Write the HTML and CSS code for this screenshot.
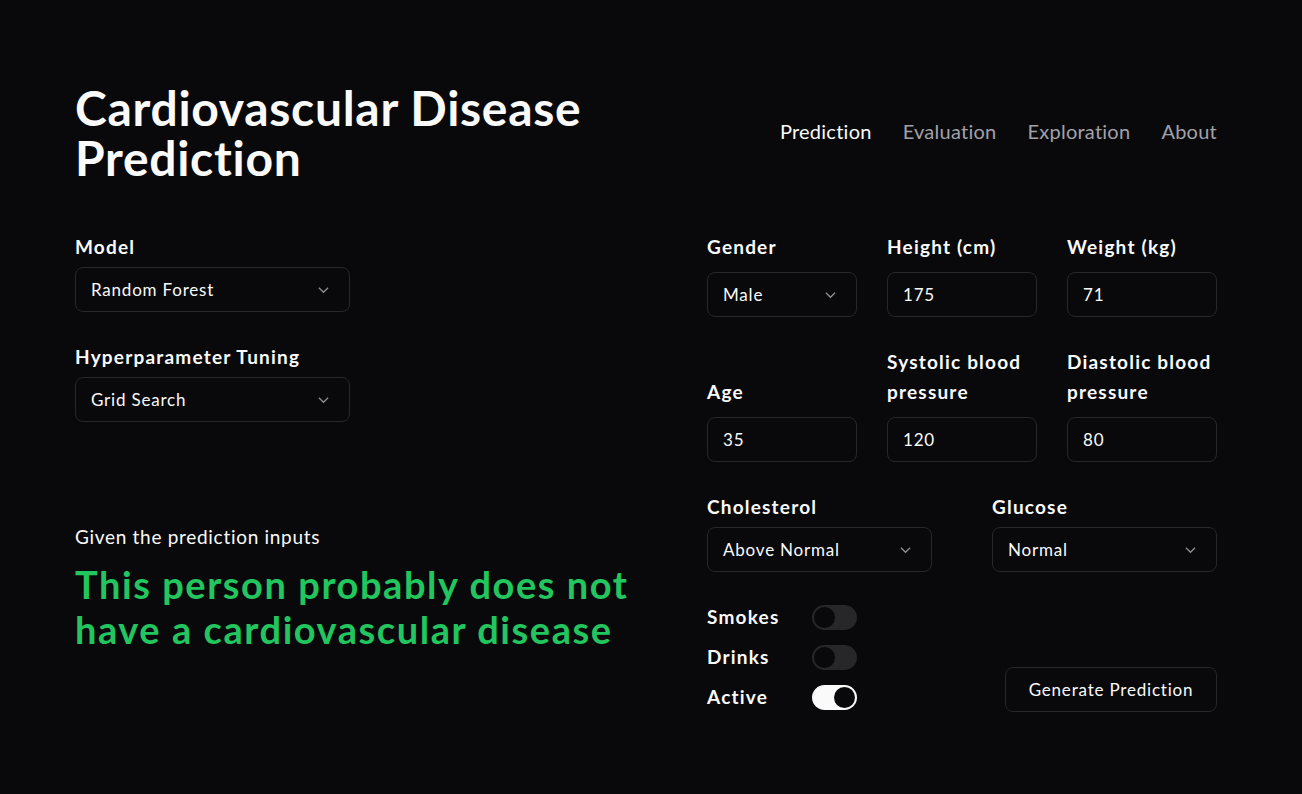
FILE: index.html
```html
<!DOCTYPE html>
<html lang="en">
<head>
<meta charset="utf-8">
<title>Cardiovascular Disease Prediction</title>
<link rel="stylesheet" href="styles.css">
</head>
<body>
<div class="page">
  <header class="header">
    <h1 class="title"><span class="title-line">Cardiovascular Disease</span><span class="title-line">Prediction</span></h1>
    <nav class="nav">
      <a class="nav-link active">Prediction</a>
      <a class="nav-link">Evaluation</a>
      <a class="nav-link">Exploration</a>
      <a class="nav-link">About</a>
    </nav>
  </header>

  <main class="main">
    <section class="left">
      <div class="field">
        <label class="label">Model</label>
        <div class="select wide"><span>Random Forest</span><svg class="chev" viewBox="0 0 12 8"><path d="M1 1.5 6 6.5 11 1.5"/></svg></div>
      </div>
      <div class="field">
        <label class="label">Hyperparameter Tuning</label>
        <div class="select wide"><span>Grid Search</span><svg class="chev" viewBox="0 0 12 8"><path d="M1 1.5 6 6.5 11 1.5"/></svg></div>
      </div>
      <div class="result">
        <p class="given">Given the prediction inputs</p>
        <p class="verdict">This person probably does not<br>have a cardiovascular disease</p>
      </div>
    </section>

    <section class="right">
      <div class="grid3">
        <div class="cell">
          <label class="label rlabel">Gender</label>
          <div class="select"><span>Male</span><svg class="chev" viewBox="0 0 12 8"><path d="M1 1.5 6 6.5 11 1.5"/></svg></div>
        </div>
        <div class="cell">
          <label class="label rlabel">Height (cm)</label>
          <div class="input">175</div>
        </div>
        <div class="cell">
          <label class="label rlabel">Weight (kg)</label>
          <div class="input">71</div>
        </div>
        <div class="cell">
          <label class="label rlabel">Age</label>
          <div class="input">35</div>
        </div>
        <div class="cell">
          <label class="label rlabel">Systolic blood pressure</label>
          <div class="input">120</div>
        </div>
        <div class="cell">
          <label class="label rlabel">Diastolic blood pressure</label>
          <div class="input">80</div>
        </div>
      </div>

      <div class="grid2">
        <div class="cell">
          <label class="label">Cholesterol</label>
          <div class="select"><span>Above Normal</span><svg class="chev" viewBox="0 0 12 8"><path d="M1 1.5 6 6.5 11 1.5"/></svg></div>
        </div>
        <div class="cell">
          <label class="label">Glucose</label>
          <div class="select"><span>Normal</span><svg class="chev" viewBox="0 0 12 8"><path d="M1 1.5 6 6.5 11 1.5"/></svg></div>
        </div>
      </div>

      <div class="bottom">
        <div class="toggles">
          <div class="toggle-row"><span class="label">Smokes</span><span class="switch"><span class="knob"></span></span></div>
          <div class="toggle-row"><span class="label">Drinks</span><span class="switch"><span class="knob"></span></span></div>
          <div class="toggle-row"><span class="label">Active</span><span class="switch on"><span class="knob"></span></span></div>
        </div>
        <button class="button">Generate Prediction</button>
      </div>
    </section>
  </main>
</div>
</body>
</html>
```

FILE: styles.css
```css
* { box-sizing: border-box; }

html, body {
  margin: 0;
  padding: 0;
  background: #09090b;
  color: #fafafa;
  font-family: "Lato", "Noto Sans", sans-serif;
}

.page {
  width: 1142px;
  margin-left: 75px;
  padding-top: 83px;
}

.header {
  display: flex;
  justify-content: space-between;
  align-items: center;
}

.title {
  margin: 0;
  font-size: 48px;
  line-height: 50px;
  font-weight: 700;
  letter-spacing: 0.7px;
  color: #fafafa;
}

.title-line { display: block; }

.nav {
  display: flex;
  gap: 31px;
  padding-bottom: 4px;
}

.nav-link {
  font-size: 20px;
  line-height: 28px;
  letter-spacing: 0.25px;
  color: #a1a1aa;
  text-decoration: none;
}

.nav-link.active { color: #fafafa; }

.main {
  display: flex;
  justify-content: space-between;
  margin-top: 49px;
}

.left { width: 600px; }

.right { width: 510px; }

.field { margin-bottom: 30px; }

.label {
  display: block;
  font-size: 19px;
  line-height: 30px;
  font-weight: 700;
  letter-spacing: 1.2px;
  color: #fafafa;
}

.field .label { margin-bottom: 5px; }

.select, .input {
  height: 45px;
  border: 1px solid #27272a;
  border-radius: 8px;
  padding: 0 20px 0 15px;
  display: flex;
  align-items: center;
  justify-content: space-between;
  font-size: 17px;
  letter-spacing: 0.8px;
  color: #fafafa;
}

.select.wide { width: 275px; }

.chev {
  width: 11px;
  height: 8px;
  fill: none;
  stroke: #8e8e94;
  stroke-width: 1.4;
  flex: none;
}

.result { margin-top: 101px; }

.given {
  margin: 0;
  font-size: 19px;
  line-height: 28px;
  letter-spacing: 0.7px;
  color: #fafafa;
}

.verdict {
  margin: 11px 0 0;
  font-size: 38px;
  line-height: 45px;
  font-weight: 700;
  letter-spacing: 1.55px;
  color: #22c55e;
}

.grid3 {
  display: grid;
  grid-template-columns: repeat(3, 150px);
  column-gap: 30px;
  row-gap: 30px;
}

.cell {
  display: flex;
  flex-direction: column;
  justify-content: flex-end;
}

.rlabel { margin-bottom: 10px; }

.grid2 {
  display: grid;
  grid-template-columns: repeat(2, 225px);
  column-gap: 60px;
  margin-top: 35px;
}

.grid2 .label { line-height: 20px; margin-bottom: 10px; }

.bottom {
  display: flex;
  justify-content: space-between;
  align-items: flex-end;
  margin-top: 30px;
}

.toggles {
  display: flex;
  flex-direction: column;
  gap: 10px;
}

.toggle-row {
  display: flex;
  align-items: center;
  height: 30px;
}

.toggle-row .label { width: 105px; }

.switch {
  width: 45px;
  height: 25px;
  border-radius: 13px;
  background: #27272a;
  padding: 2px;
  display: flex;
}

.knob {
  width: 21px;
  height: 21px;
  border-radius: 50%;
  background: #09090b;
}

.switch.on { background: #fafafa; justify-content: flex-end; }

.button {
  width: 212px;
  height: 45px;
  background: #09090b;
  border: 1px solid #27272a;
  border-radius: 8px;
  color: #fafafa;
  font-family: inherit;
  font-size: 17px;
  letter-spacing: 0.8px;
}
```
